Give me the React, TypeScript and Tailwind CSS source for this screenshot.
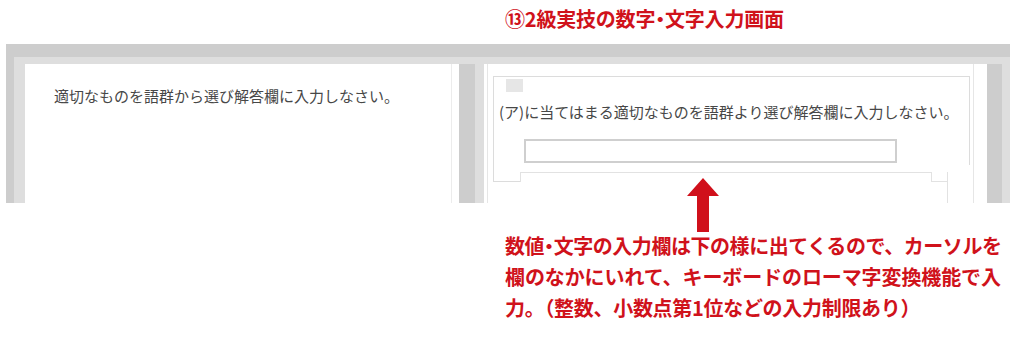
const jp = "font-['Noto_Sans_CJK_JP','Noto_Sans',sans-serif]";

function Arrow() {
  return (
    <svg
      className="absolute left-[687px] top-[178px]"
      width="32"
      height="54"
      viewBox="0 0 32 54"
    >
      <polygon points="16,0 32,18 22,18 22,54 10,54 10,18 0,18" fill="#d0101b" />
    </svg>
  );
}

export default function App() {
  return (
    <div className={`relative h-[338px] w-[1024px] overflow-hidden bg-white ${jp}`}>
      {/* Title */}
      <div className="h-[44px] pl-[505px] pt-[5px]">
        <h1 className="text-[20px] font-bold leading-[28px] tracking-[-0.2px] text-[#d0121b] whitespace-nowrap">
          ⑬2級実技の数字<span className="[font-feature-settings:'palt']">・</span>文字入力画面
        </h1>
      </div>

      {/* Screenshot of exam screen */}
      <div className="ml-[6px] flex h-[159px] w-[1004px] flex-col bg-[#cdcdcd] pt-[13px]">
        <div className="ml-[8px] flex flex-1 bg-[#dedede] pt-[7px]">
          <div className="w-[11px]" />

          {/* Left panel */}
          <div className="flex w-[434px] bg-white">
            <div className="w-[427px] border-r border-[#ececec] pl-[29px] pt-[22px]">
              <p className="text-[15px] leading-[20px] text-[#474747] whitespace-nowrap">
                適切なものを語群から選び解答欄に入力しなさい。
              </p>
            </div>
          </div>

          <div className="w-[16px] bg-[#cdcdcd]" />
          <div className="w-[9px]" />

          {/* Right panel */}
          <div className="w-[503px] bg-white pl-[3px]">
            <div className="h-full w-[487px] border-x border-[#e6e6e6] pl-[5px] pt-[12px]">
              <div className="h-[89px] w-[477px] border-x border-t border-[#dcdcdc]">
                <div className="ml-[12px] mt-[2px] h-[13px] w-[17px] bg-[#e6e6e6]" />
                <p className="ml-[5px] mt-[10px] text-[15px] leading-[20px] text-[#474747] whitespace-nowrap">
                  (ア)に当てはまる適切なものを語群より選び解答欄に入力しなさい。
                </p>
                <div className="ml-[30px] mt-[17px] h-[24px] w-[373px] border-2 border-[#cfcfcf] bg-white" />
              </div>
              <div className="h-[7px] w-[477px] border-l border-[#dcdcdc]" />
              <div className="flex h-[10px]">
                <div className="w-[27px] border-b border-l border-[#dcdcdc]" />
                <div className="w-[412px] border-x border-t border-[#e2e2e2]" />
                <div className="w-[16px] border-b border-r border-[#e2e2e2]" />
              </div>
              <div className="h-[21px] w-[455px] border-r border-[#e2e2e2]" />
            </div>
          </div>

          <div className="w-[15px] bg-[#cdcdcd]" />
        </div>
      </div>

      <Arrow />

      {/* Caption */}
      <div className="mt-[27px] pl-[505px] text-[20px] font-bold leading-[31px] text-[#d0121b] whitespace-nowrap">
        <p className="tracking-[-0.45px]">
          数値<span className="[font-feature-settings:'palt']">・</span>文字の入力欄は下の様に出てくるので、カーソルを
        </p>
        <p className="tracking-[-0.1px]">欄のなかにいれて、キーボードのローマ字変換機能で入</p>
        <p className="tracking-[-0.3px]">力。（整数、小数点第1位などの入力制限あり）</p>
      </div>
    </div>
  );
}
